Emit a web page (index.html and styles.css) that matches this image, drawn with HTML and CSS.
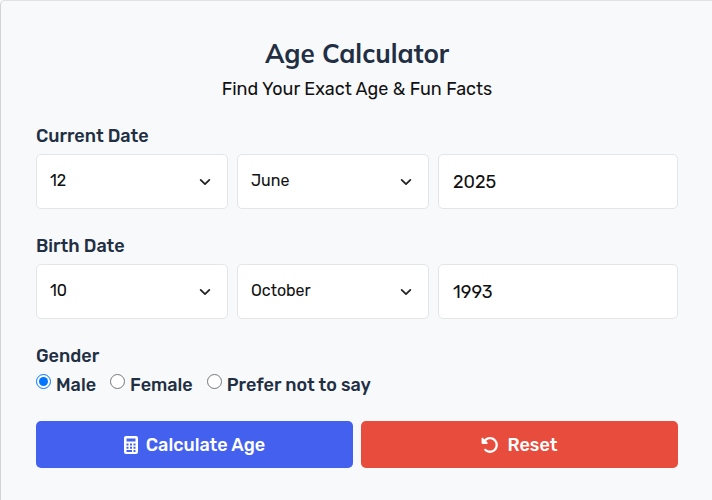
FILE: index.html
```html
<!DOCTYPE html>
<html lang="en">
<head>
  <meta charset="UTF-8">
  <meta name="viewport" content="width=device-width, initial-scale=1.0">
  <title>Age Calculator</title>
  <link rel="stylesheet" href="styles.css">
</head>
<body>
  <form class="calculator">
    <h1>Age Calculator</h1>
    <p class="subtitle">Find Your Exact Age &amp; Fun Facts</p>

    <fieldset class="form-group">
      <legend>Current Date</legend>
      <div class="date-row">
        <div class="select-wrap">
          <select aria-label="Current day"><option>12</option></select>
          <svg class="chevron" viewBox="0 0 16 16"><path d="M3 5.500l5 5 5-5"/></svg>
        </div>
        <div class="select-wrap">
          <select aria-label="Current month"><option>June</option></select>
          <svg class="chevron" viewBox="0 0 16 16"><path d="M3 5.500l5 5 5-5"/></svg>
        </div>
        <input class="year" type="text" inputmode="numeric" value="2025" aria-label="Current year">
      </div>
    </fieldset>

    <fieldset class="form-group">
      <legend>Birth Date</legend>
      <div class="date-row">
        <div class="select-wrap">
          <select aria-label="Birth day"><option>10</option></select>
          <svg class="chevron" viewBox="0 0 16 16"><path d="M3 5.500l5 5 5-5"/></svg>
        </div>
        <div class="select-wrap">
          <select aria-label="Birth month"><option>October</option></select>
          <svg class="chevron" viewBox="0 0 16 16"><path d="M3 5.500l5 5 5-5"/></svg>
        </div>
        <input class="year" type="text" inputmode="numeric" value="1993" aria-label="Birth year">
      </div>
    </fieldset>

    <fieldset class="form-group">
      <legend>Gender</legend>
      <div class="radio-row">
        <div class="radio">
          <input type="radio" name="gender" id="male" checked>
          <label for="male">Male</label>
        </div>
        <div class="radio">
          <input type="radio" name="gender" id="female">
          <label for="female">Female</label>
        </div>
        <div class="radio">
          <input type="radio" name="gender" id="other">
          <label for="other">Prefer not to say</label>
        </div>
      </div>
    </fieldset>

    <div class="buttons">
      <button type="button" class="btn-calculate">
        <svg width="14" height="18" viewBox="0 0 14 18">
          <path fill="currentColor" fill-rule="evenodd" d="M2 0h10a2 2 0 0 1 2 2v14a2 2 0 0 1-2 2H2a2 2 0 0 1-2-2V2a2 2 0 0 1 2-2zM2.500 2.500v3h9v-3zM2.500 7.500v2h2v-2zM6 7.500v2h2v-2zM9.500 7.500v2h2v-2zM2.500 10.700v2h2v-2zM6 10.700v2h2v-2zM9.500 10.700v2h2v-2zM2.500 13.900v2H8v-2zM9.500 13.900v2h2v-2z"/>
        </svg>
        Calculate Age
      </button>
      <button type="reset" class="btn-reset">
        <svg width="18" height="18" viewBox="0 0 512 512">
          <path fill="currentColor" d="M48.500 224H40c-13.300 0-24-10.700-24-24V72c0-9.700 5.800-18.500 14.800-22.200s19.300-1.700 26.200 5.200L98.600 96.600c87.600-86.500 228.700-86.200 315.800 1c87.500 87.500 87.500 229.300 0 316.800s-229.300 87.500-316.800 0c-12.500-12.500-12.500-32.800 0-45.300s32.800-12.500 45.300 0c62.500 62.500 163.800 62.500 226.300 0s62.500-163.800 0-226.300c-62.200-62.200-162.700-62.500-225.300-1L185 183c6.900 6.900 8.900 17.200 5.200 26.200s-12.500 14.800-22.200 14.800H48.500z"/>
        </svg>
        Reset
      </button>
    </div>
  </form>
</body>
</html>
```

FILE: styles.css
```css
* {
  box-sizing: border-box;
}
body {
  margin: 0;
  background-color: #f8f9fb;
  color: #111;
  font-family: Rubik, Roboto, sans-serif;
}
.calculator {
  min-height: 100vh;
  padding: 34px 34px 31px 35px;
  border-top: 1px solid #dfe1e4;
  border-left: 1px solid #d2d4d7;
  border-top-left-radius: 5px;
}
h1 {
  margin: 0;
  color: #222f43;
  font-family: Mulish, Lato, sans-serif;
  font-size: 26px;
  font-weight: 700;
  line-height: 38px;
  text-align: center;
}
.subtitle {
  margin: 4px 0 23px;
  font-size: 18px;
  line-height: 24px;
  text-align: center;
}
.form-group {
  min-width: 0;
  margin: 0 0 25px;
  padding: 0;
  border: 0;
}
legend {
  margin-bottom: 6px;
  padding: 0;
  color: #222f43;
  font-size: 18px;
  font-weight: 500;
  line-height: 24px;
}
.date-row {
  display: grid;
  grid-template-columns: 4fr 4fr 5fr;
  gap: 9px;
}
.select-wrap {
  position: relative;
}
.select-wrap select,
.year {
  width: 100%;
  height: 55px;
  padding: 0 14px;
  border: 1px solid #e3e5e9;
  border-radius: 5px;
  background-color: #fff;
  color: #111;
  font-family: inherit;
}
.select-wrap select {
  padding: 0 40px 2px 13px;
  font-size: 16px;
  appearance: none;
}
.chevron {
  position: absolute;
  top: 21px;
  right: 16px;
  width: 14px;
  height: 14px;
  fill: none;
  stroke: #222;
  stroke-width: 2;
  stroke-linecap: round;
  stroke-linejoin: round;
  pointer-events: none;
}
.year {
  font-size: 18px;
}
.radio-row {
  display: flex;
  flex-wrap: wrap;
  gap: 14px;
}
.radio {
  display: flex;
  align-items: flex-start;
  gap: 5px;
}
.radio input {
  width: 15px;
  height: 15px;
  margin: 0;
}
.radio label {
  color: #222f43;
  font-size: 18px;
  font-weight: 500;
  line-height: 22px;
}
.buttons {
  display: flex;
  gap: 8px;
}
.buttons button {
  display: flex;
  flex: 1;
  align-items: center;
  justify-content: center;
  gap: 8px;
  height: 47px;
  border: 0;
  border-radius: 5px;
  color: #fff;
  font-family: inherit;
  font-size: 18px;
  font-weight: 500;
  cursor: pointer;
}
.buttons .btn-calculate {
  background-color: #4361ee;
}
.buttons .btn-reset {
  background-color: #e74c3c;
}
```
